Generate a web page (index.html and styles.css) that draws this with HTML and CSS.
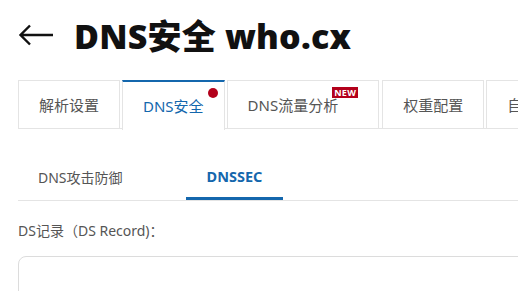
FILE: index.html
```html
<!DOCTYPE html>
<html lang="zh-CN">
<head>
    <meta charset="UTF-8">
    <meta name="viewport" content="width=device-width, initial-scale=1.0">
    <title>DNS安全 who.cx</title>
    <link rel="stylesheet" href="styles.css">
</head>
<body>
    <div class="page">
        <div class="header">
            <a class="back" href="#">
                <svg width="36" height="22" viewBox="0 0 36 22">
                    <path d="M35 11H3M12 1.5L2.5 11L12 20.5" fill="none" stroke="#111" stroke-width="2.4"/>
                </svg>
            </a>
            <h1>DNS安全 who.cx</h1>
        </div>

        <div class="tabs">
            <div class="tab">解析设置</div>
            <div class="tab active">DNS安全<span class="dot"></span></div>
            <div class="tab tab-new">DNS流量分析<span class="badge">NEW</span></div>
            <div class="tab">权重配置</div>
            <div class="tab">自定义线路</div>
        </div>

        <div class="subtabs">
            <div class="subtab">DNS攻击防御</div>
            <div class="subtab active">DNSSEC</div>
        </div>

        <div class="field">
            <label>DS记录（DS Record)：</label>
            <div class="textbox"></div>
        </div>
    </div>
</body>
</html>
```

FILE: styles.css
```css
:root {
    --blue: #1467ad;
    --text: #555;
    --border: #e4e4e4;
    --red: #b3001b;
}

* {
    box-sizing: border-box;
    margin: 0;
    padding: 0;
}

body {
    font-family: "Noto Sans", "Noto Sans CJK SC", sans-serif;
    background: #fff;
    color: var(--text);
    overflow: hidden;
}

.page {
    padding: 0 0 0 18px;
    width: 700px;
}

.header {
    display: flex;
    align-items: center;
    height: 80px;
    padding-bottom: 11px;
}

.back {
    display: flex;
    width: 56px;
}

h1 {
    font-family: "Open Sans", "Noto Sans CJK SC", sans-serif;
    font-size: 34px;
    font-weight: 800;
    color: #111;
    letter-spacing: 0.2px;
}

.tabs {
    display: flex;
    gap: 2px;
    border-bottom: 1px solid var(--border);
    height: 49px;
}

.tab {
    position: relative;
    height: 49px;
    padding: 0 20px 2px;
    border: 1px solid var(--border);
    border-bottom: none;
    display: flex;
    align-items: center;
    font-size: 15px;
    white-space: nowrap;
}

.tab.active {
    color: var(--blue);
    border-top: 2px solid var(--blue);
    height: 50px;
    background: #fff;
    padding-top: 0;
}

.tab-new {
    padding-right: 40px;
    margin-right: 1px;
}

.dot {
    position: absolute;
    top: 6px;
    right: 6px;
    width: 10px;
    height: 10px;
    border-radius: 50%;
    background: var(--red);
}

.badge {
    position: absolute;
    top: 6px;
    right: 20px;
    background: var(--red);
    color: #fff;
    font-size: 9px;
    font-weight: 700;
    line-height: 11px;
    padding: 0 2px;
    letter-spacing: 0.3px;
}

.subtabs {
    display: flex;
    gap: 43px;
    margin-top: 26px;
    border-bottom: 1px solid var(--border);
}

.subtab {
    height: 45px;
    padding: 0 20px 2px;
    display: flex;
    align-items: center;
    font-size: 14px;
}

.subtab.active {
    color: var(--blue);
    font-weight: 700;
    font-size: 14.5px;
    border-bottom: 3px solid var(--blue);
    margin-bottom: -1px;
    padding: 0 21px;
}

.field {
    padding-top: 19px;
}

.field label {
    display: block;
    font-size: 14px;
    height: 20px;
}

.textbox {
    margin-top: 16px;
    height: 120px;
    border: 1px solid #dcdcdc;
    border-radius: 8px;
}
```
